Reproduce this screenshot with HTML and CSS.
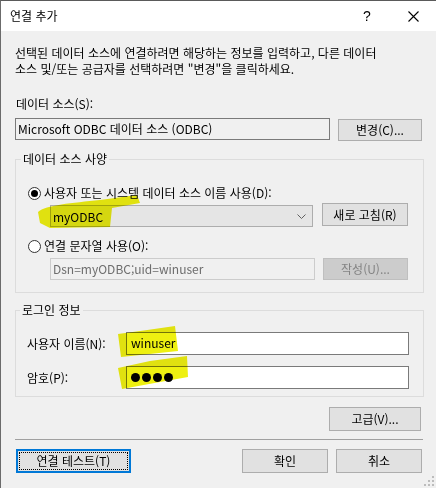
FILE: index.html
```html
<!DOCTYPE html>
<html lang="ko">
<head>
<meta charset="utf-8">
<title>연결 추가</title>
<link rel="stylesheet" href="styles.css">
</head>
<body>
<div class="window">
  <div class="titlebar">
    <span class="title">연결 추가</span>
    <div class="caption-btns">
      <span class="cap help">?</span>
      <span class="cap close"><svg width="11" height="11" viewBox="0 0 11 11"><path d="M0.5 0.5 L10.5 10.5 M10.5 0.5 L0.5 10.5" stroke="#000" stroke-width="1.1" fill="none"/></svg></span>
    </div>
  </div>
  <div class="content">
    <p class="desc">선택된 데이터 소스에 연결하려면 해당하는 정보를 입력하고, 다른 데이터<br>소스 및/또는 공급자를 선택하려면 "변경"을 클릭하세요.</p>
    <div class="ds-label">데이터 소스(S):</div>
    <div class="ds-row">
      <div class="textbox readonly ds-box">Microsoft ODBC 데이터 소스 (ODBC)</div>
      <button class="btn btn-change">변경(C)...</button>
    </div>

    <fieldset class="group spec">
      <legend>데이터 소스 사양</legend>
      <div class="radio-row"><span class="radio checked"></span><span>사용자 또는 시스템 데이터 소스 이름 사용(D):</span></div>
      <div class="combo-row">
        <div class="combo"><span>myODBC</span><svg class="chev" width="9" height="5" viewBox="0 0 9 5"><path d="M0.5 0.5 L4.5 4.5 L8.5 0.5" stroke="#606060" stroke-width="1" fill="none"/></svg></div>
        <button class="btn btn-refresh">새로 고침(R)</button>
      </div>
      <div class="radio-row second"><span class="radio"></span><span>연결 문자열 사용(O):</span></div>
      <div class="conn-row">
        <div class="textbox disabled conn-box">Dsn=myODBC;uid=winuser</div>
        <button class="btn btn-disabled btn-build">작성(U)...</button>
      </div>
    </fieldset>

    <fieldset class="group login">
      <legend>로그인 정보</legend>
      <div class="login-row">
        <span class="login-label">사용자 이름(N):</span>
        <div class="textbox login-box">winuser</div>
      </div>
      <div class="login-row second">
        <span class="login-label">암호(P):</span>
        <div class="textbox login-box pw"><span class="dot"></span><span class="dot"></span><span class="dot"></span><span class="dot"></span></div>
      </div>
    </fieldset>

    <div class="adv-row"><button class="btn btn-adv">고급(V)...</button></div>
    <div class="separator"></div>
    <div class="bottom-row">
      <button class="btn btn-test">연결 테스트(T)</button>
      <div class="right-btns">
        <button class="btn btn-ok">확인</button>
        <button class="btn btn-cancel">취소</button>
      </div>
    </div>
  </div>

  <svg class="grip" width="10" height="10" viewBox="0 0 10 10">
    <rect x="8" y="0" width="2" height="2" fill="#bcbcbc"/>
    <rect x="4" y="4" width="2" height="2" fill="#bcbcbc"/>
    <rect x="8" y="4" width="2" height="2" fill="#bcbcbc"/>
    <rect x="0" y="8" width="2" height="2" fill="#bcbcbc"/>
    <rect x="4" y="8" width="2" height="2" fill="#bcbcbc"/>
    <rect x="8" y="8" width="2" height="2" fill="#bcbcbc"/>
  </svg>

  <svg class="marks" width="436" height="488" viewBox="0 0 436 488">
    <path d="M38 212 C 46 205, 72 203, 100 200 L 137 195 L 140 203 L 112 208 L 110 227 L 50 228 L 40 223 Z" fill="#eef011"/>
    <path d="M118 334 Q 148 330 175 326 L 178 351 Q 150 354 121 357 Z" fill="#eef011"/>
    <path d="M118 368 L 150 361 L 187 356 L 188 377 L 160 382 L 122 389 Z" fill="#eef011"/>
  </svg>
</div>
</body>
</html>
```

FILE: styles.css
```css
* { box-sizing: border-box; }

body {
  margin: 0;
  font-family: "Noto Sans CJK KR", "Noto Sans", sans-serif;
  font-size: 12px;
  color: #000;
}

.window {
  position: relative;
  width: 436px;
  height: 488px;
  border-top: 1px solid #5a5a5a;
  border-left: 1px solid #6b6b6b;
  background: #f0f0f0;
  overflow: hidden;
}

.titlebar {
  height: 30px;
  background: #fff;
  display: flex;
  align-items: center;
  justify-content: space-between;
}

.title {
  padding-left: 9px;
  line-height: 16px;
  font-size: 12px;
}

.caption-btns {
  display: flex;
  height: 100%;
}

.cap {
  width: 46px;
  display: flex;
  align-items: center;
  justify-content: center;
}

.help {
  font-family: "Liberation Sans", sans-serif;
  font-size: 14px;
}

.content {
  padding: 14px 14px 0 14px;
}

.desc {
  margin: 0;
  line-height: 16px;
  white-space: nowrap;
}

.ds-label {
  margin-top: 19px;
  padding-left: 1px;
  line-height: 16px;
}

.ds-row {
  margin-top: 6px;
  display: flex;
  gap: 8px;
  align-items: flex-start;
}

.textbox {
  height: 23px;
  border: 1px solid #7a7a7a;
  background: #fff;
  padding-left: 2px;
  line-height: 20px;
  white-space: nowrap;
}

.readonly { background: #f0f0f0; }

.ds-box {
  width: 315px;
  height: 22px;
}

.btn {
  background: #e1e1e1;
  border: 1px solid #adadad;
  font: inherit;
  color: #000;
  padding: 0;
  margin: 0;
  text-align: center;
  line-height: 20px;
}

.btn-change {
  width: 84px;
  height: 22px;
  margin-top: 1px;
}

.group {
  margin: 0;
  border: 1px solid #dcdcdc;
  min-width: 0;
  width: 409px;
}

.group legend {
  padding: 0 2px;
  margin-left: -7px;
  line-height: 16px;
}

.spec {
  margin-top: 10px;
  padding: 18px 14px 12px 12px;
}

.radio-row {
  display: flex;
  align-items: center;
  height: 16px;
  line-height: 16px;
  gap: 3px;
}

.radio-row.second { margin-top: 11px; }

.radio {
  width: 13px;
  height: 13px;
  border: 1px solid #333;
  border-radius: 50%;
  background: #fff;
  display: flex;
  align-items: center;
  justify-content: center;
}

.radio.checked::after {
  content: "";
  width: 7px;
  height: 7px;
  border-radius: 50%;
  background: #000;
}

.combo-row {
  margin-top: 2px;
  padding-left: 22px;
  display: flex;
  align-items: flex-start;
  gap: 9px;
}

.combo {
  margin-top: 2px;
  width: 263px;
  height: 22px;
  background: #e5e5e5;
  border: 1px solid #adadad;
  display: flex;
  align-items: center;
  justify-content: space-between;
  padding: 0 6px 0 2px;
}

.btn-refresh {
  width: 86px;
  height: 23px;
}

.conn-row {
  margin-top: 4px;
  padding-left: 22px;
  display: flex;
  gap: 8px;
}

.disabled {
  background: #f0f0f0;
  border-color: #cccccc;
  color: #6d6d6d;
}

.conn-box {
  width: 265px;
  height: 22px;
}

.btn-disabled {
  background: #cccccc;
  border-color: #bfbfbf;
  color: #838383;
}

.btn-build {
  width: 85px;
  height: 22px;
}

.login {
  margin-top: 9px;
  padding: 14px 14px 7px 11px;
}

.login-row {
  display: flex;
  align-items: center;
}

.login-row.second { margin-top: 11px; }

.login-label {
  width: 99px;
  line-height: 16px;
}

.login-box {
  width: 283px;
  padding-left: 4px;
}

.pw {
  display: flex;
  align-items: center;
  gap: 2px;
}

.dot {
  width: 9px;
  height: 9px;
  border-radius: 50%;
  background: #000;
}

.adv-row {
  margin-top: 10px;
  display: flex;
  justify-content: flex-end;
  padding-right: 1px;
}

.btn-adv {
  width: 92px;
  height: 24px;
}

.separator {
  margin-top: 8px;
  width: 408px;
  border-top: 1px solid #a0a0a0;
}

.bottom-row {
  margin-top: 9px;
  display: flex;
  justify-content: space-between;
  padding-left: 1px;
}

.right-btns {
  display: flex;
  gap: 8px;
}

.btn-test {
  width: 115px;
  height: 24px;
  border: 2px solid #0078d7;
  outline: 1px dotted #000;
  outline-offset: -4px;
  line-height: 18px;
}

.btn-ok, .btn-cancel {
  width: 86px;
  height: 24px;
}

.grip {
  position: absolute;
  right: 2px;
  bottom: 2px;
}

.marks {
  position: absolute;
  top: -1px;
  left: -1px;
  mix-blend-mode: multiply;
  pointer-events: none;
}
```
